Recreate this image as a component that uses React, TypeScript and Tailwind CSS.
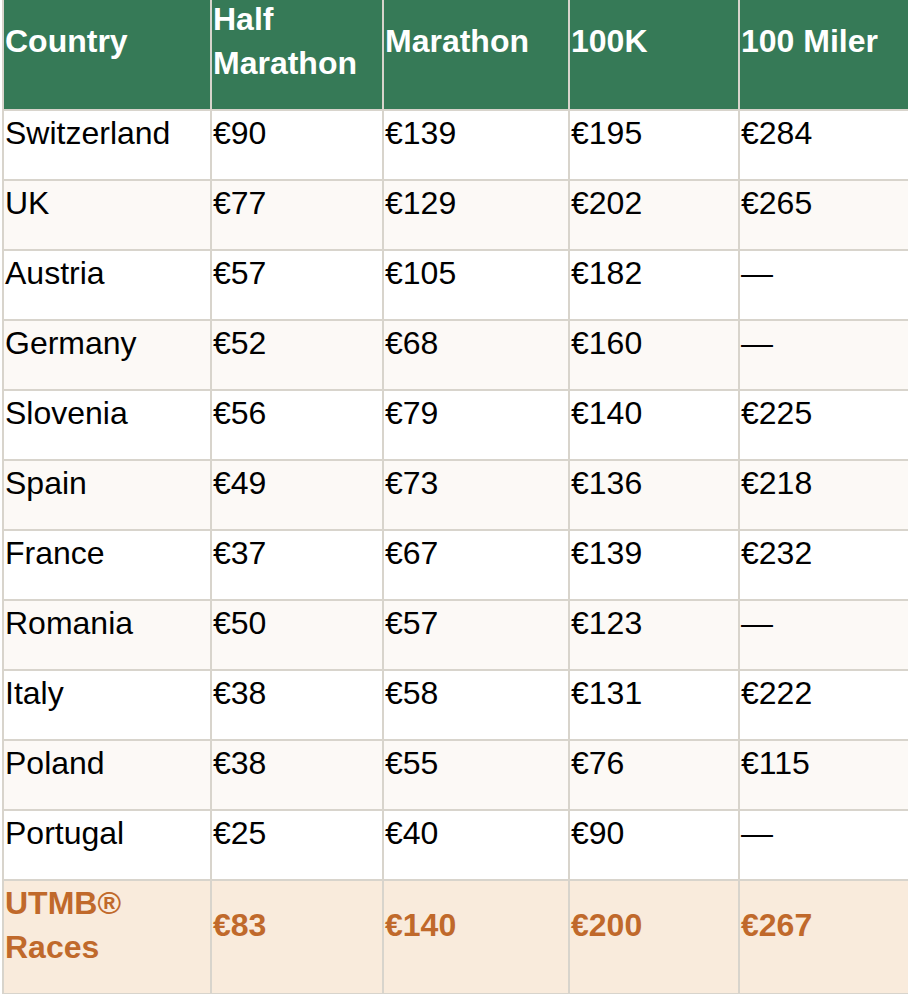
import React from 'react'

type Row = { country: string, half: string, marathon: string, k100: string, miler: string }

const rows: Row[] = [
  { country: 'Switzerland', half: '€90', marathon: '€139', k100: '€195', miler: '€284' },
  { country: 'UK', half: '€77', marathon: '€129', k100: '€202', miler: '€265' },
  { country: 'Austria', half: '€57', marathon: '€105', k100: '€182', miler: '—' },
  { country: 'Germany', half: '€52', marathon: '€68', k100: '€160', miler: '—' },
  { country: 'Slovenia', half: '€56', marathon: '€79', k100: '€140', miler: '€225' },
  { country: 'Spain', half: '€49', marathon: '€73', k100: '€136', miler: '€218' },
  { country: 'France', half: '€37', marathon: '€67', k100: '€139', miler: '€232' },
  { country: 'Romania', half: '€50', marathon: '€57', k100: '€123', miler: '—' },
  { country: 'Italy', half: '€38', marathon: '€58', k100: '€131', miler: '€222' },
  { country: 'Poland', half: '€38', marathon: '€55', k100: '€76', miler: '€115' },
  { country: 'Portugal', half: '€25', marathon: '€40', k100: '€90', miler: '—' },
]

const grid = 'grid grid-cols-[206px_170px_184px_168px_1fr] gap-x-[2px]'

const Cell: React.FC<{ children: React.ReactNode, className?: string }> = ({ children, className = '' }) => (
  <div className={`pl-[1px] pr-2 pb-[24px] flex items-center ${className}`}>
    <div>{children}</div>
  </div>
)

export default function App() {
  return (
    <div
      className="w-[908px] h-[994px] overflow-hidden bg-white"
      style={{ fontFamily: '"Liberation Sans", Arial, sans-serif' }}
    >
      <div className="ml-[2px] -mt-[3px] pl-[2px] pb-[2px] bg-[#d8d4cc] flex flex-col gap-y-[2px] text-[32px] leading-[44px]">
        {/* header */}
        <div className={`${grid} bg-[#d8d4cc]`}>
          {['Country', 'Half Marathon', 'Marathon', '100K', '100 Miler'].map((h) => (
            <Cell key={h} className="bg-[#367a57] text-white font-bold pb-[23px]">
              {h === 'Half Marathon' ? (<>Half<br />Marathon</>) : h}
            </Cell>
          ))}
        </div>

        {rows.map((r, i) => (
          <div key={r.country} className={grid}>
            {[r.country, r.half, r.marathon, r.k100, r.miler].map((v, j) => (
              <Cell key={j} className={`${i % 2 === 1 ? 'bg-[#fcf9f6]' : 'bg-white'} text-black`}>
                {v}
              </Cell>
            ))}
          </div>
        ))}

        {/* highlight row */}
        <div className={grid}>
          {['UTMB® Races', '€83', '€140', '€200', '€267'].map((v) => (
            <Cell key={v} className="bg-[#f9ebdc] text-[#c0692b] font-bold pb-[23px]">
              {v === 'UTMB® Races' ? (<>UTMB®<br />Races</>) : v}
            </Cell>
          ))}
        </div>
      </div>
    </div>
  )
}
